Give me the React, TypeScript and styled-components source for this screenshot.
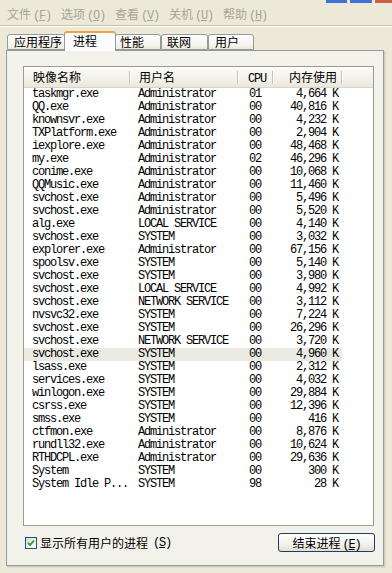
import { FC } from 'react';
import styled, { createGlobalStyle } from 'styled-components';

const cjk = `"Noto Sans CJK SC", "Noto Sans", sans-serif`;
const mono = `"Liberation Mono", "DejaVu Sans Mono", monospace`;

const GlobalStyle = createGlobalStyle`
  html, body {
    margin: 0;
    padding: 0;
  }
  body {
    background: #ece9d8;
    width: 392px;
    height: 573px;
    overflow: hidden;
  }
`;

interface Proc {
  name: string;
  user: string;
  cpu: string;
  mem: string;
}

const procs: Proc[] = [
  { name: 'taskmgr.exe', user: 'Administrator', cpu: '01', mem: '4,664 K' },
  { name: 'QQ.exe', user: 'Administrator', cpu: '00', mem: '40,816 K' },
  { name: 'knownsvr.exe', user: 'Administrator', cpu: '00', mem: '4,232 K' },
  { name: 'TXPlatform.exe', user: 'Administrator', cpu: '00', mem: '2,904 K' },
  { name: 'iexplore.exe', user: 'Administrator', cpu: '00', mem: '48,468 K' },
  { name: 'my.exe', user: 'Administrator', cpu: '02', mem: '46,296 K' },
  { name: 'conime.exe', user: 'Administrator', cpu: '00', mem: '10,068 K' },
  { name: 'QQMusic.exe', user: 'Administrator', cpu: '00', mem: '11,460 K' },
  { name: 'svchost.exe', user: 'Administrator', cpu: '00', mem: '5,496 K' },
  { name: 'svchost.exe', user: 'Administrator', cpu: '00', mem: '5,520 K' },
  { name: 'alg.exe', user: 'LOCAL SERVICE', cpu: '00', mem: '4,140 K' },
  { name: 'svchost.exe', user: 'SYSTEM', cpu: '00', mem: '3,032 K' },
  { name: 'explorer.exe', user: 'Administrator', cpu: '00', mem: '67,156 K' },
  { name: 'spoolsv.exe', user: 'SYSTEM', cpu: '00', mem: '5,140 K' },
  { name: 'svchost.exe', user: 'SYSTEM', cpu: '00', mem: '3,980 K' },
  { name: 'svchost.exe', user: 'LOCAL SERVICE', cpu: '00', mem: '4,992 K' },
  { name: 'svchost.exe', user: 'NETWORK SERVICE', cpu: '00', mem: '3,112 K' },
  { name: 'nvsvc32.exe', user: 'SYSTEM', cpu: '00', mem: '7,224 K' },
  { name: 'svchost.exe', user: 'SYSTEM', cpu: '00', mem: '26,296 K' },
  { name: 'svchost.exe', user: 'NETWORK SERVICE', cpu: '00', mem: '3,720 K' },
  { name: 'svchost.exe', user: 'SYSTEM', cpu: '00', mem: '4,960 K' },
  { name: 'lsass.exe', user: 'SYSTEM', cpu: '00', mem: '2,312 K' },
  { name: 'services.exe', user: 'SYSTEM', cpu: '00', mem: '4,032 K' },
  { name: 'winlogon.exe', user: 'SYSTEM', cpu: '00', mem: '29,884 K' },
  { name: 'csrss.exe', user: 'SYSTEM', cpu: '00', mem: '12,396 K' },
  { name: 'smss.exe', user: 'SYSTEM', cpu: '00', mem: '416 K' },
  { name: 'ctfmon.exe', user: 'Administrator', cpu: '00', mem: '8,876 K' },
  { name: 'rundll32.exe', user: 'Administrator', cpu: '00', mem: '10,624 K' },
  { name: 'RTHDCPL.exe', user: 'Administrator', cpu: '00', mem: '29,636 K' },
  { name: 'System', user: 'SYSTEM', cpu: '00', mem: '300 K' },
  { name: 'System Idle P...', user: 'SYSTEM', cpu: '98', mem: '28 K' },
];

const SELECTED = 20;

const menus = [
  { label: '文件', key: 'F' },
  { label: '选项', key: 'O' },
  { label: '查看', key: 'V' },
  { label: '关机', key: 'U' },
  { label: '帮助', key: 'H' },
];

const tabs = [
  { label: '应用程序', width: 58, pad: 6 },
  { label: '进程', width: 52, pad: 8 },
  { label: '性能', width: 46, pad: 4 },
  { label: '联网', width: 47, pad: 5 },
  { label: '用户', width: 46, pad: 6 },
];

const Window = styled.div`
  width: 392px;
  height: 573px;
  display: flex;
  flex-direction: column;
`;

const TitleEdge = styled.div`
  height: 3px;
  display: flex;
  justify-content: flex-end;
  gap: 3px;
`;

const Cap = styled.span<{ w: number; color: string }>`
  width: ${(p) => p.w}px;
  background: ${(p) => p.color};
`;

const MenuBar = styled.div`
  height: 22px;
  display: flex;
  align-items: center;
  padding-left: 1px;
  border-bottom: 1px solid #c6c3b2;
  box-shadow: 0 1px 0 #fff;
`;

const MenuItem = styled.span`
  padding: 0 6px;
  width: 42px;
  font: 12px ${cjk};
  color: #a6a49b;
  white-space: nowrap;
`;

const Key = styled.span`
  font: 12px ${mono};
  letter-spacing: -1.2px;
  margin-left: 2px;
  & u {
    text-underline-offset: 1px;
  }
`;

const TabStrip = styled.div`
  margin-top: 5px;
  margin-bottom: -1px;
  height: 20px;
  padding-left: 7px;
  display: flex;
  align-items: flex-end;
  position: relative;
  z-index: 1;
`;

const Tab = styled.div<{ w: number; pad: number; active?: boolean }>`
  box-sizing: border-box;
  width: ${(p) => p.w}px;
  height: ${(p) => (p.active ? 20 : 16)}px;
  margin-bottom: ${(p) => (p.active ? 0 : 1)}px;
  padding-left: ${(p) => p.pad}px;
  border: 1px solid #919b9c;
  border-bottom: ${(p) => (p.active ? 'none' : '1px solid #919b9c')};
  border-top: ${(p) => (p.active ? '2px solid #f0a73a' : '1px solid #919b9c')};
  border-radius: 3px 3px 0 0;
  background: ${(p) =>
    p.active ? '#fcfcfe' : 'linear-gradient(#fefefe, #f4f3ee 70%, #ece9d8)'};
  font: 12px ${cjk};
  line-height: ${(p) => (p.active ? 15 : 14)}px;
  color: #000;
  white-space: nowrap;
  margin-left: ${(p) => (p.active ? -1 : 0)}px;
  margin-right: ${(p) => (p.active ? -1 : 0)}px;
  position: relative;
  z-index: ${(p) => (p.active ? 2 : 1)};
`;

const Panel = styled.div`
  flex: 1;
  margin: 0 8px 7px 6px;
  border: 1px solid #919b9c;
  background: #f3f2ea;
  box-shadow: 1px 1px 0 #d0cdbd, 2px 2px 0 #dedbcb;
  padding: 15px 9px 0 16px;
  display: flex;
  flex-direction: column;
`;

const ListBox = styled.div`
  height: 458px;
  border: 1px solid #9d9b91;
  background: #fff;
  overflow: hidden;
`;

const cols = '106px 108px 35px 69px';

const Header = styled.div`
  display: grid;
  grid-template-columns: ${cols} 1fr;
  height: 20px;
  border-bottom: 1px solid #d8d5c6;
  background: linear-gradient(#fbfbf9, #f1efe6 70%, #e9e7dc);
`;

const HeadCell = styled.div<{ pad: number; right?: boolean; sep?: boolean }>`
  position: relative;
  font: 12px ${cjk};
  line-height: 20px;
  color: #000;
  padding: ${(p) => (p.right ? `0 ${p.pad}px 0 0` : `0 0 0 ${p.pad}px`)};
  text-align: ${(p) => (p.right ? 'right' : 'left')};
  &::after {
    content: '';
    display: ${(p) => (p.sep ? 'block' : 'none')};
    position: absolute;
    right: 0;
    top: 4px;
    bottom: 3px;
    width: 1px;
    background: #c7c4b4;
    box-shadow: 1px 0 0 #fff;
  }
`;

const HeadMono = styled.span`
  font: 12px ${mono};
  letter-spacing: -1.2px;
`;

const Row = styled.div<{ selected?: boolean }>`
  display: grid;
  grid-template-columns: ${cols};
  width: 318px;
  height: 13px;
  background: ${(p) => (p.selected ? '#ebeae2' : 'transparent')};
  font: 12px ${mono};
  letter-spacing: -1.2px;
  line-height: 13px;
  color: #000;
  white-space: pre;
`;

const Cell = styled.span<{ pad: number; right?: boolean }>`
  padding: ${(p) => (p.right ? `0 ${p.pad}px 0 0` : `0 0 0 ${p.pad}px`)};
  text-align: ${(p) => (p.right ? 'right' : 'left')};
`;

const Footer = styled.div`
  margin-top: 7px;
  height: 19px;
  display: flex;
  align-items: center;
  justify-content: space-between;
`;

const CheckLabel = styled.label`
  display: flex;
  align-items: center;
  gap: 3px;
  padding-left: 2px;
  font: 12px ${cjk};
  color: #000;
`;

const Box = styled.span`
  box-sizing: border-box;
  width: 12px;
  height: 12px;
  border: 1px solid #1c5180;
  background: linear-gradient(135deg, #dcdcd7, #fff);
  display: flex;
  align-items: center;
  justify-content: center;
`;

const Button = styled.button`
  box-sizing: border-box;
  width: 97px;
  height: 19px;
  margin-right: -1px;
  padding: 0;
  border: 1px solid #1e3f60;
  border-radius: 3px;
  background: linear-gradient(#ffffff, #f2f1ec 60%, #e3e0d4);
  font: 12px ${cjk};
  color: #000;
  line-height: 17px;
`;

const Accel: FC<{ k: string }> = ({ k }) => (
  <Key>
    (<u>{k}</u>)
  </Key>
);

const App: FC = () => (
  <Window>
    <GlobalStyle />
    <TitleEdge>
      <Cap w={21} color="#3d6fd9" />
      <Cap w={22} color="#3d6fd9" />
      <Cap w={17} color="#c9614a" />
    </TitleEdge>
    <MenuBar>
      {menus.map((m) => (
        <MenuItem key={m.key}>
          {m.label}
          <Accel k={m.key} />
        </MenuItem>
      ))}
    </MenuBar>
    <TabStrip>
      {tabs.map((t, i) => (
        <Tab key={t.label} w={t.width} pad={t.pad} active={i === 1}>
          {t.label}
        </Tab>
      ))}
    </TabStrip>
    <Panel>
      <ListBox>
        <Header>
          <HeadCell pad={9} sep>
            映像名称
          </HeadCell>
          <HeadCell pad={9} sep>
            用户名
          </HeadCell>
          <HeadCell pad={10} sep>
            <HeadMono>CPU</HeadMono>
          </HeadCell>
          <HeadCell pad={5} right sep>
            内存使用
          </HeadCell>
          <HeadCell pad={0} />
        </Header>
        {procs.map((p, i) => (
          <Row key={i} selected={i === SELECTED}>
            <Cell pad={8}>{p.name}</Cell>
            <Cell pad={8}>{p.user}</Cell>
            <Cell pad={11}>{p.cpu}</Cell>
            <Cell pad={4} right>
              {p.mem}
            </Cell>
          </Row>
        ))}
      </ListBox>
      <Footer>
        <CheckLabel>
          <Box>
            <svg width="8" height="8" viewBox="0 0 8 8">
              <path d="M1 3.8 L3 6 L7 1.6" fill="none" stroke="#21a121" strokeWidth="1.8" />
            </svg>
          </Box>
          显示所有用户的进程
          <Accel k="S" />
        </CheckLabel>
        <Button>
          结束进程
          <Accel k="E" />
        </Button>
      </Footer>
    </Panel>
  </Window>
);

export default App;
